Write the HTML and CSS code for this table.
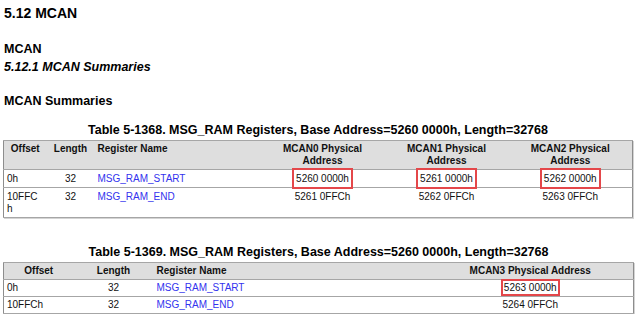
FILE: index.html
```html
<!DOCTYPE html>
<html lang="en">
<head>
<meta charset="utf-8">
<title>5.12 MCAN</title>
<link rel="stylesheet" href="styles.css">
</head>
<body>
<h1 class="sec-title">5.12 MCAN</h1>
<h2 class="sub-title">MCAN</h2>
<h3 class="sub-sub">5.12.1 MCAN Summaries</h3>
<h4 class="sum-title">MCAN Summaries</h4>

<table class="reg t1">
  <caption>Table 5-1368. MSG_RAM Registers, Base Address=5260 0000h, Length=32768</caption>
  <colgroup>
    <col class="c-off1"><col class="c-len1"><col class="c-name1"><col class="c-addr"><col class="c-addr"><col class="c-addr">
  </colgroup>
  <thead>
    <tr>
      <th class="ctr">Offset</th>
      <th class="ctr">Length</th>
      <th class="lft">Register Name</th>
      <th class="ctr">MCAN0 Physical Address</th>
      <th class="ctr">MCAN1 Physical Address</th>
      <th class="ctr">MCAN2 Physical Address</th>
    </tr>
  </thead>
  <tbody>
    <tr>
      <td class="off">0h</td>
      <td class="ctr">32</td>
      <td><a class="reg-link" href="#">MSG_RAM_START</a></td>
      <td class="ctr"><span class="hl">5260 0000h</span></td>
      <td class="ctr"><span class="hl">5261 0000h</span></td>
      <td class="ctr"><span class="hl">5262 0000h</span></td>
    </tr>
    <tr>
      <td class="off">10FFCh</td>
      <td class="ctr">32</td>
      <td><a class="reg-link" href="#">MSG_RAM_END</a></td>
      <td class="ctr">5261 0FFCh</td>
      <td class="ctr">5262 0FFCh</td>
      <td class="ctr">5263 0FFCh</td>
    </tr>
  </tbody>
</table>

<table class="reg t2">
  <caption>Table 5-1369. MSG_RAM Registers, Base Address=5260 0000h, Length=32768</caption>
  <colgroup>
    <col class="c-off2"><col class="c-len2"><col class="c-name2"><col class="c-addr2">
  </colgroup>
  <thead>
    <tr>
      <th class="ctr">Offset</th>
      <th class="ctr">Length</th>
      <th class="lft">Register Name</th>
      <th class="ctr">MCAN3 Physical Address</th>
    </tr>
  </thead>
  <tbody>
    <tr>
      <td class="off">0h</td>
      <td class="ctr">32</td>
      <td><a class="reg-link" href="#">MSG_RAM_START</a></td>
      <td class="ctr"><span class="hl sm">5263 0000h</span></td>
    </tr>
    <tr>
      <td class="off">10FFCh</td>
      <td class="ctr">32</td>
      <td><a class="reg-link" href="#">MSG_RAM_END</a></td>
      <td class="ctr">5264 0FFCh</td>
    </tr>
  </tbody>
</table>
</body>
</html>
```
FILE: styles.css
```css
html, body {
  background: #ffffff;
}
body {
  margin: 0;
  padding: 5px 7px 0 3px;
  font-family: "Liberation Sans", Arial, sans-serif;
  color: #000;
}
.sec-title {
  margin: 0 0 0 1px;
  font-size: 14px;
  line-height: 16px;
  font-weight: bold;
}
.sub-title {
  margin: 20.5px 0 0 1px;
  font-size: 12.5px;
  line-height: 15px;
  font-weight: bold;
}
.sub-sub {
  margin: 3.5px 0 0 1px;
  font-size: 12.5px;
  line-height: 15px;
  font-weight: bold;
  font-style: italic;
}
.sum-title {
  margin: 19px 0 0 1px;
  font-size: 12.5px;
  line-height: 15px;
  font-weight: bold;
}
.reg {
  width: 630px;
  table-layout: fixed;
  border-collapse: collapse;
  border: 1px solid #8d8d8d;
  box-shadow: 1px 1px 0 #d4d4d4;
  font-size: 10px;
  line-height: 12px;
}
.t1 { margin-top: 14px; }
.t2 { margin-top: 27px; }
.reg caption {
  font-size: 12.5px;
  line-height: 15px;
  font-weight: bold;
  padding-bottom: 2px;
  text-align: center;
  white-space: nowrap;
}
.reg th, .reg td {
  padding: 2px 3px;
  vertical-align: top;
  border-top: 1px solid #a6a6a6;
  border-bottom: 1px solid #a6a6a6;
  color: #111;
}
.t1 tbody td {
  padding-top: 3px;
  padding-bottom: 2px;
}
.reg th {
  background: #dedede;
  font-weight: bold;
}
.ctr { text-align: center; }
.lft { text-align: left; }
.off {
  text-align: left;
  word-break: break-all;
}
.t1 .off {
  padding-right: 7px;
}
.c-off1 { width: 43px; }
.c-len1 { width: 48px; }
.c-name1 { width: 166px; }
.c-addr { width: 124px; }
.c-off2 { width: 70px; }
.c-len2 { width: 80px; }
.c-name2 { width: 274px; }
.c-addr2 { width: 206px; }
.reg-link {
  color: #3333ee;
  text-decoration: none;
}
.hl {
  position: relative;
}
.hl::after {
  content: "";
  position: absolute;
  top: -5px;
  bottom: -5px;
  left: -4px;
  right: -4px;
  border: 2px solid #e4474a;
}
.hl.sm::after {
  top: -3px;
  bottom: -3px;
  left: -3px;
  right: -3px;
}
```
